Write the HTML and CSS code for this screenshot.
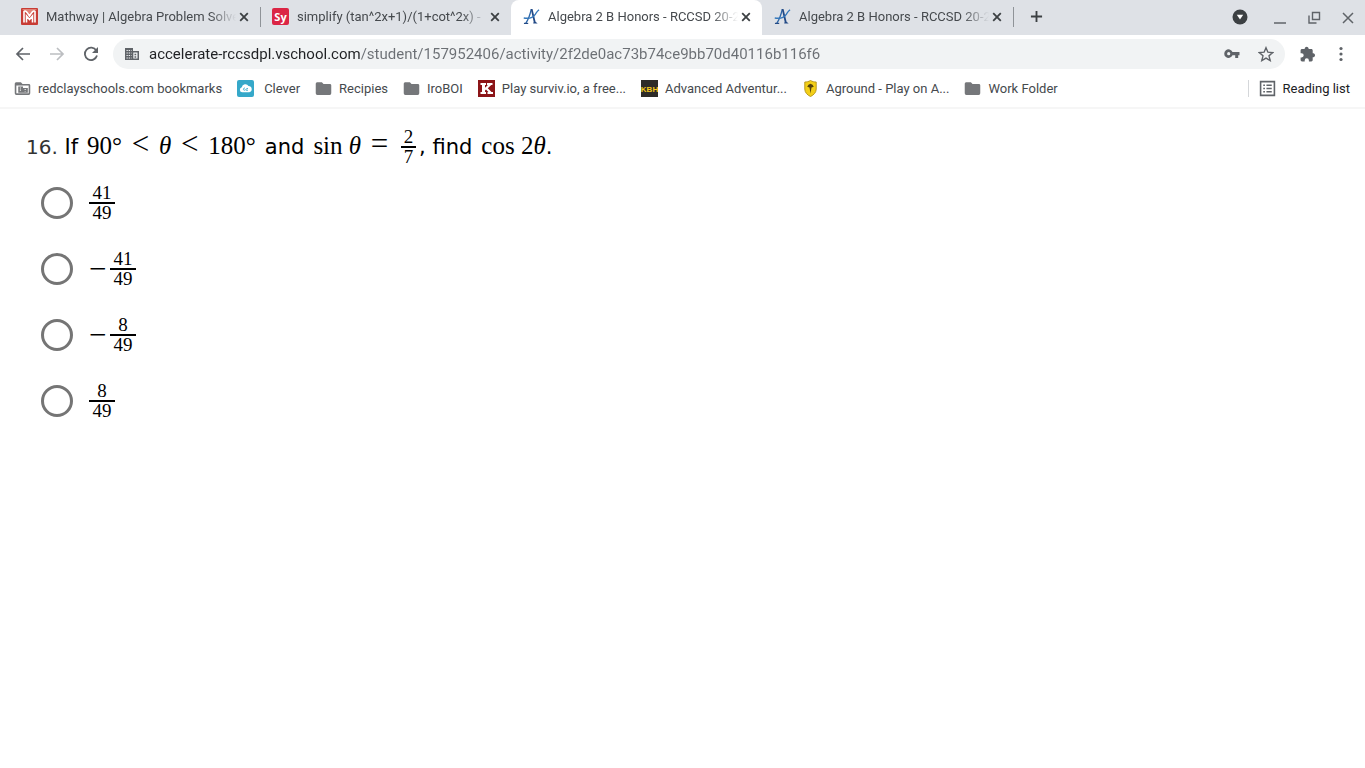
FILE: index.html
```
<!DOCTYPE html>
<html lang="en">
<head>
  <meta charset="UTF-8" />
  <meta name="viewport" content="width=device-width, initial-scale=1" />
  <title>Algebra 2 B Honors - RCCSD 20-2</title>
  <link rel="stylesheet" href="styles.css">
</head>
<body>
  <svg class="defs" aria-hidden="true">
    <symbol id="close" viewBox="0 0 10 10"><path d="M1.200 1.200l7.600 7.600M8.800 1.200L1.200 8.800" fill="none" stroke="#3c4043" stroke-width="1.800"/></symbol>
    <symbol id="folder" viewBox="0 0 16 16"><path d="M2 2h4.500L8 3.700h6A1.300 1.300 0 0 1 15.300 5v7.500A1.500 1.500 0 0 1 13.800 14H2.200A1.500 1.500 0 0 1 .7 12.500v-9A1.400 1.400 0 0 1 2 2z" fill="#75777a"/></symbol>
    <symbol id="accelerate" viewBox="0 0 18 18">
      <path d="M3 16C5.500 12.500 7.500 7 8.800 1.200" fill="none" stroke="#2d66a8" stroke-width="1.400"/>
      <path d="M8.200 1h1.900l3.200 13.600 2.200 1.700h-4.700l.5-1.700z" fill="#234a86"/>
      <path d="M.8 10.600c5 .8 9.800-.2 12.400-4.200.9-1.500 1.800-3.200 3.800-4.600" fill="none" stroke="#3578bb" stroke-width="1.400"/>
      <path d="M1 16.300h4.500" stroke="#234a86" stroke-width="1.300"/>
    </symbol>
  </svg>

  <header class="browser">
    <nav class="tabs">
      <div class="tab">
        <svg class="favicon" viewBox="0 0 17 17"><rect width="17" height="17" rx="1" fill="#c83c35"/><path d="M1 1h15L8.500 8z" fill="#e18478"/><path d="M3 14.500V3.500c1.500-1.500 3 .5 5.500 4.500 2.500-4 4-6 5.500-4.500v11M5.500 14.500V8l3 3.500 3-3.500v6.500" fill="none" stroke="#fff" stroke-width="1.600"/></svg>
        <a class="tab-title" href="#">Mathway | Algebra Problem Solve</a>
        <button class="tab-close" aria-label="Close tab"><svg><use href="#close"/></svg></button>
      </div>
      <div class="tab divided">
        <svg class="favicon" viewBox="0 0 17 17"><rect width="17" height="17" rx="2" fill="#db2545"/><text x="8.500" y="12.500" text-anchor="middle" class="sy">Sy</text></svg>
        <a class="tab-title" href="#">simplify (tan^2x+1)/(1+cot^2x) -</a>
        <button class="tab-close" aria-label="Close tab"><svg><use href="#close"/></svg></button>
      </div>
      <div class="tab active">
        <svg class="favicon"><use href="#accelerate"/></svg>
        <a class="tab-title" href="#">Algebra 2 B Honors - RCCSD 20-2</a>
        <button class="tab-close" aria-label="Close tab"><svg><use href="#close"/></svg></button>
      </div>
      <div class="tab">
        <svg class="favicon"><use href="#accelerate"/></svg>
        <a class="tab-title" href="#">Algebra 2 B Honors - RCCSD 20-2</a>
        <button class="tab-close" aria-label="Close tab"><svg><use href="#close"/></svg></button>
      </div>
      <button class="new-tab divided" aria-label="New tab"><svg viewBox="0 0 14 14"><path d="M7 1v12M1 7h12" stroke="#3c4043" stroke-width="2"/></svg></button>
      <div class="window-controls">
        <button class="search-tabs" aria-label="Search tabs"><svg viewBox="0 0 16 16"><circle cx="8" cy="8" r="7.500" fill="#3c4043"/><path d="M4.800 5.800h6.400L8 10.500z" fill="#fff"/></svg></button>
        <button aria-label="Minimize"><svg viewBox="0 0 16 16"><path d="M2 14h12" stroke="#5f6368" stroke-width="1.500"/></svg></button>
        <button aria-label="Restore"><svg viewBox="0 0 16 16"><path d="M6.500 3.500h7v7h-7zM3 6.500V14h7.500" fill="none" stroke="#5f6368" stroke-width="1.400"/></svg></button>
        <button aria-label="Close"><svg viewBox="0 0 16 16"><path d="M3 4l10 10M13 4L3 14" stroke="#5f6368" stroke-width="1.500"/></svg></button>
      </div>
    </nav>

    <div class="toolbar">
      <div class="nav-buttons">
        <button aria-label="Back"><svg viewBox="0 0 16 16"><path d="M15 8H2M8 2L2 8l6 6" fill="none" stroke="#5f6368" stroke-width="1.700"/></svg></button>
        <button aria-label="Forward"><svg viewBox="0 0 16 16"><path d="M1 8h13M8 2l6 6-6 6" fill="none" stroke="#bcbec1" stroke-width="1.700"/></svg></button>
        <button aria-label="Reload"><svg viewBox="0 0 16 16"><path d="M13.300 4.500A6.200 6.200 0 1 0 14 9.600" fill="none" stroke="#5f6368" stroke-width="1.800"/><path d="M15 1v6H9z" fill="#5f6368"/></svg></button>
      </div>
      <div class="omnibox">
        <svg viewBox="0 0 16 16"><path d="M1 2h8v3h6v9H1z" fill="#5f6368"/><path d="M2.500 4.500h5M2.500 7h5M2.500 9.500h5M2.500 12h5" stroke="#f1f3f4" stroke-width="1" stroke-dasharray="1.300 .9"/><path d="M9.300 6.500h4.200v6H9.300z" fill="#f1f3f4"/><path d="M10.500 8.500h1.700M10.500 11h1.700" stroke="#5f6368" stroke-width="1.300"/></svg>
        <input class="url" type="text" aria-label="Address" value="accelerate-rccsdpl.vschool.com/student/157952406/activity/2f2de0ac73b74ce9bb70d40116b116f6">
        <button aria-label="Passwords"><svg viewBox="0 0 16 16"><path fill-rule="evenodd" d="M8.500 6A4.300 4.300 0 1 0 8.500 9.300h2.700V12h3V9.300H15.500V6zM4.700 6.100a1.600 1.600 0 1 1 0 3.200 1.600 1.600 0 0 1 0-3.200z" fill="#5f6368"/></svg></button>
        <button aria-label="Bookmark this page"><svg viewBox="0 0 16 16"><path d="M8 1.700l1.900 4.500 4.800.4-3.700 3.200 1.200 4.800L8 12.100l-4.200 2.500L5 9.800 1.300 6.600l4.800-.4z" fill="none" stroke="#5f6368" stroke-width="1.400"/></svg></button>
      </div>
      <div class="menu-buttons">
        <button aria-label="Extensions"><svg viewBox="0 0 16 16"><path d="M13.500 7.300H12.700V4.500c0-.8-.6-1.400-1.400-1.400H8.600V2.300a2 2 0 0 0-3.900 0v.8H2c-.7 0-1.400.6-1.400 1.400v2.700h1a2.100 2.100 0 0 1 0 4.200h-1V14c0 .8.700 1.400 1.400 1.400h2.700v-1a2.100 2.100 0 0 1 4.200 0v1h2.400c.8 0 1.400-.6 1.400-1.400v-2.800h.8a2 2 0 0 0 0-3.900z" fill="#5f6368"/></svg></button>
        <button aria-label="Menu"><svg viewBox="0 0 16 16"><g fill="#5f6368"><circle cx="8" cy="2.500" r="1.600"/><circle cx="8" cy="8" r="1.600"/><circle cx="8" cy="13.500" r="1.600"/></g></svg></button>
      </div>
    </div>

    <nav class="bookmarks">
      <a href="#"><svg viewBox="0 0 16 16"><use href="#folder"/><path d="M2.200 5.200h11.600v7.300H2.200z" fill="#fff"/><path d="M4 6h4.500v1.500H13v4.500H4z" fill="#75777a"/><path d="M6 7v4M10.500 8.500V11" stroke="#fff" stroke-width="1" stroke-dasharray="1 1"/></svg>redclayschools.com bookmarks</a>
      <a href="#" class="wide"><svg viewBox="0 0 17 17"><rect width="17" height="17" rx="2" fill="#35a8c9"/><path d="M5.200 12.300a2.600 2.600 0 0 1-.4-5.100A3.600 3.600 0 0 1 11.500 6a3.200 3.200 0 0 1 .8 6.300z" fill="#fff"/><path d="M8 8.200c-1.800-.8-2.300 2.300-.4 2 1.200-.2 2-2.300 3.400-1.700M9 10.200h2" fill="none" stroke="#35a8c9" stroke-width=".9"/></svg>Clever</a>
      <a href="#"><svg><use href="#folder"/></svg>Recipies</a>
      <a href="#"><svg><use href="#folder"/></svg>IroBOI</a>
      <a href="#"><svg viewBox="0 0 17 17"><path d="M0 0h17v17H0z" fill="#8c1518"/><path d="M2.500 3h5.500v2H7v2.800L10 5H9V3h5.500v2h-1.300l-3.400 3.200L13.500 12H15v2H9.500v-2h1L8 9.600l-1 .9V12h1v2H2.500v-2H4V5H2.500z" fill="#fff"/></svg>Play surviv.io, a free...</a>
      <a href="#"><svg viewBox="0 0 17 17"><path d="M0 0h17v17H0z" fill="#2d2b28"/><text x="8.500" y="12" text-anchor="middle" class="kbh">KBH</text></svg>Advanced Adventur...</a>
      <a href="#"><svg viewBox="0 0 17 17"><path d="M8.500.5c2 1.200 3.800 1.500 5.700 1.500v7c0 3.500-2.500 6-5.700 7.500C5.300 15 2.800 12.500 2.800 9V2c1.900 0 3.700-.3 5.700-1.500z" fill="#f3cf17" stroke="#b99a20"/><path d="M8.500 13.500l-1-6-2.300-.8 1.300-2 2-1 2 1 1.300 2-2.300.8z" fill="#55430e"/></svg>Aground - Play on A...</a>
      <a href="#"><svg><use href="#folder"/></svg>Work Folder</a>
      <a href="#" class="reading-list"><svg viewBox="0 0 16 16"><path d="M1.500 1.500h13v13h-13z" fill="none" stroke="#5f6368" stroke-width="1.500"/><path d="M4 5h1.600M4 8h1.600M4 11h1.600M7 5h5M7 8h5M7 11h5" stroke="#5f6368" stroke-width="1.500"/></svg>Reading list</a>
    </nav>
  </header>

  <main class="activity">
    <form>
      <fieldset>
        <legend class="question">
          <span class="text"><span class="number">16.</span> If</span>
          <span class="math">90°<span class="op">&lt;</span><i>θ</i><span class="op">&lt;</span>180°</span>
          <span class="text">and</span>
          <span class="equation">
            <span class="math">sin <i>θ</i><span class="op">=</span></span>
            <span class="frac inline"><span>2</span><span>7</span></span>
            <span class="text">, find</span>
          </span>
          <span class="math">cos 2<i>θ</i><span class="text">.</span></span>
        </legend>
        <label class="choice">
          <input type="radio" name="answer">
          <span class="frac"><span>41</span><span>49</span></span>
        </label>
        <label class="choice">
          <input type="radio" name="answer">
          <span class="minus">−</span>
          <span class="frac"><span>41</span><span>49</span></span>
        </label>
        <label class="choice">
          <input type="radio" name="answer">
          <span class="minus">−</span>
          <span class="frac"><span>8</span><span>49</span></span>
        </label>
        <label class="choice">
          <input type="radio" name="answer">
          <span class="frac"><span>8</span><span>49</span></span>
        </label>
      </fieldset>
    </form>
  </main>
</body>
</html>
```
FILE: styles.css
```
* {
  box-sizing: border-box;
}
body {
  margin: 0;
  background: #fff;
  color: #000;
  font-family: Roboto, sans-serif;
}
.defs {
  display: none;
}
svg {
  display: block;
  flex: none;
  width: 16px;
  height: 16px;
}
button {
  display: flex;
  align-items: center;
  justify-content: center;
  padding: 0;
  border: none;
  background: none;
  cursor: pointer;
}
a {
  color: inherit;
  text-decoration: none;
}

/* browser frame */
.browser {
  border-bottom: 2px solid #f6f6f6;
}
.tabs {
  display: flex;
  height: 35px;
  padding-left: 9px;
  background: #dee1e6;
}
.tab {
  display: flex;
  align-items: center;
  flex: 0 1 251px;
  min-width: 0;
  padding: 0 11px 2px 12px;
  color: #45494d;
  font-size: 13px;
}
.tab.active {
  background: #fff;
  border-radius: 8px 8px 0 0;
}
.divided {
  background: linear-gradient(#8f9398, #8f9398) 0 7px / 1px 20px no-repeat;
}
.favicon {
  width: 17px;
  height: 17px;
}
.tab-title {
  flex: 1;
  min-width: 0;
  margin: 0 3px 0 8px;
  overflow: hidden;
  white-space: nowrap;
  -webkit-mask-image: linear-gradient(to left, transparent, #000 26px);
  mask-image: linear-gradient(to left, transparent, #000 26px);
}
.tab-close svg {
  width: 10px;
  height: 10px;
}
.sy {
  fill: #fff;
  font: bold 11px "Open Sans", sans-serif;
}
.kbh {
  fill: #f3c81c;
  font: bold 8px "Liberation Sans", sans-serif;
}
.new-tab {
  width: 47px;
  padding-bottom: 2px;
}
.new-tab svg {
  width: 13px;
  height: 13px;
}
.window-controls {
  display: flex;
  align-items: center;
  gap: 18px;
  margin-left: auto;
  padding: 0 9px 2px 0;
}
.search-tabs {
  margin-right: 6px;
}

.toolbar {
  display: flex;
  align-items: center;
  height: 38px;
  padding: 0 16px 0 15px;
}
.nav-buttons {
  display: flex;
  gap: 18px;
  margin-right: 14px;
}
.omnibox {
  display: flex;
  align-items: center;
  flex: 1;
  height: 30px;
  padding: 0 11px;
  border-radius: 15px;
  background: #f1f3f4;
}
.omnibox button {
  margin-left: 18px;
}
.url {
  flex: 1;
  min-width: 0;
  margin-left: 9px;
  padding: 0;
  border: none;
  outline: none;
  font: 15px Roboto, sans-serif;
  background: linear-gradient(to right, #202124 212px, #6b6f74 212px);
  -webkit-background-clip: text;
  background-clip: text;
  -webkit-text-fill-color: transparent;
}
.menu-buttons {
  display: flex;
  gap: 17px;
  margin-left: 15px;
}

.bookmarks {
  display: flex;
  align-items: center;
  gap: 15px;
  height: 34px;
  padding: 0 15px 3px 14px;
  color: #45494d;
  font-size: 13px;
  white-space: nowrap;
}
.bookmarks a {
  display: flex;
  align-items: center;
  gap: 7px;
}
.bookmarks .wide {
  gap: 10px;
}
.bookmarks svg {
  width: 17px;
  height: 17px;
}
.bookmarks .reading-list {
  margin-left: auto;
  padding-left: 10px;
  border-left: 1px solid #d5d7da;
  color: #202124;
}

/* question */
.activity {
  padding: 19px 26px;
}
fieldset {
  min-width: 0;
  margin: 0;
  padding: 0;
  border: none;
}
.question {
  display: flex;
  align-items: baseline;
  gap: 9px;
  height: 36px;
  margin-bottom: 6px;
  padding: 0;
  line-height: 36px;
  white-space: nowrap;
}
.equation {
  display: flex;
  align-items: baseline;
  gap: 3px;
}
.text {
  font-family: Verdana, "DejaVu Sans", sans-serif;
  font-size: 21px;
}
.number {
  color: #333;
  font-size: 20px;
}
.math,
.frac {
  font-family: "Liberation Serif", serif;
}
.math {
  font-size: 25px;
}
.op {
  display: inline-block;
  width: 37px;
  font-size: 31px;
  line-height: 24px;
  text-align: center;
}
.frac {
  display: inline-flex;
  flex-direction: column;
  width: 26px;
  font-size: 19px;
  line-height: 18px;
  text-align: center;
}
.frac span + span {
  border-top: 2px solid #000;
}
.frac.inline {
  align-self: center;
  width: 15px;
}
.choice {
  display: flex;
  align-items: center;
  height: 66px;
  padding-left: 15px;
}
.choice input {
  appearance: none;
  width: 32px;
  height: 32px;
  margin: 0 16px 0 0;
  border: 3px solid #757575;
  border-radius: 50%;
}
.choice input:checked {
  background: radial-gradient(#757575 7px, transparent 8px);
}
.minus {
  width: 21px;
  font: 31px "Liberation Serif", serif;
}
```
